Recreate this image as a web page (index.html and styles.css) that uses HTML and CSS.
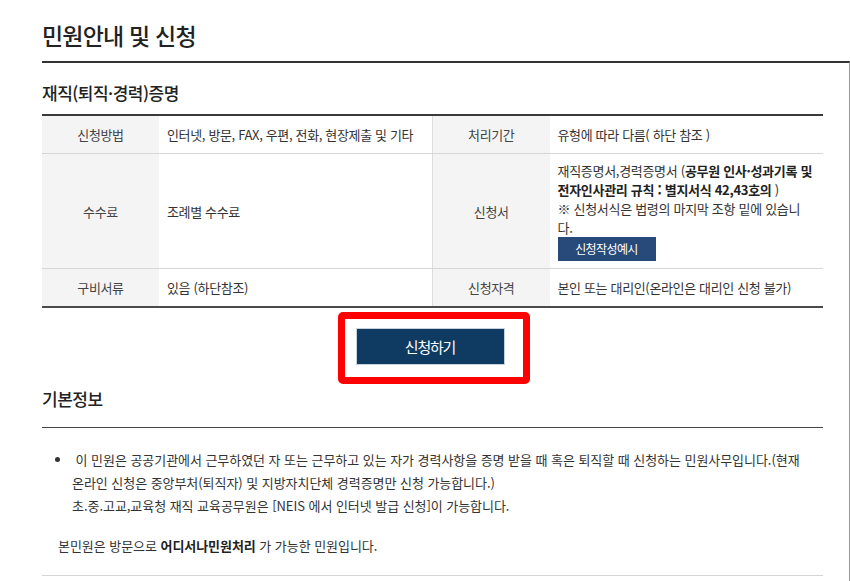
FILE: index.html
```html
<!DOCTYPE html>
<html lang="ko">

<head>
    <meta charset="UTF-8">
    <meta name="viewport" content="width=device-width, initial-scale=1.0">
    <title>민원안내 및 신청</title>
    <link rel="stylesheet" href="styles.css">
</head>

<body>
    <div class="page">
        <h1 class="page-title">민원안내 및 신청</h1>
        <div class="panel">
            <div class="panel-inner">
                <h2 class="sec-title">재직(퇴직·경력)증명</h2>
                <table class="info">
                    <colgroup>
                        <col class="col-head">
                        <col>
                        <col class="col-head">
                        <col>
                    </colgroup>
                    <tr>
                        <th>신청방법</th>
                        <td>인터넷, 방문, FAX, 우편, 전화, 현장제출 및 기타</td>
                        <th class="split">처리기간</th>
                        <td>유형에 따라 다름( 하단 참조 )</td>
                    </tr>
                    <tr>
                        <th>수수료</th>
                        <td>조례별 수수료</td>
                        <th class="split">신청서</th>
                        <td class="form-cell">
                            재직증명서,경력증명서 (<b>공무원 인사·성과기록 및<br>전자인사관리 규칙 : 별지서식 42,43호의</b> )<br>
                            ※ 신청서식은 법령의 마지막 조항 밑에 있습니<br>다.
                            <a href="#" class="sample-btn">신청작성예시</a>
                        </td>
                    </tr>
                    <tr>
                        <th>구비서류</th>
                        <td>있음 (하단참조)</td>
                        <th class="split">신청자격</th>
                        <td>본인 또는 대리인(온라인은 대리인 신청 불가)</td>
                    </tr>
                </table>

                <div class="apply-row">
                    <a href="#" class="apply-btn">신청하기<span class="mark"></span></a>
                </div>

                <h2 class="sec-title basic">기본정보</h2>
                <div class="basic-body">
                    <ul>
                        <li>&nbsp;이 민원은 공공기관에서 근무하였던 자 또는 근무하고 있는 자가 경력사항을 증명 받을 때 혹은 퇴직할 때 신청하는 민원사무입니다.(현재<br>온라인 신청은 중앙부처(퇴직자) 및 지방자치단체 경력증명만 신청 가능합니다.)<br>초.중.고교,교육청 재직 교육공무원은 [NEIS 에서 인터넷 발급 신청]이 가능합니다.</li>
                    </ul>
                    <p>본민원은 방문으로 <b>어디서나민원처리</b> 가 가능한 민원입니다.</p>
                </div>
            </div>
        </div>
    </div>
</body>

</html>
```

FILE: styles.css
```css
body {
    margin: 0;
    padding: 0;
    background: #fff;
    color: #333;
    font-family: "Noto Sans CJK KR", "Noto Sans", sans-serif;
    font-size: 13px;
    letter-spacing: -0.05px;
}

.page {
    padding-left: 42px;
}

.page-title {
    margin: 20px 0 11px;
    font-size: 23px;
    line-height: 30px;
    font-weight: 500;
    letter-spacing: -0.8px;
    color: #222;
}

.panel {
    border-top: 2px solid #333;
    border-right: 1px solid #999;
    min-height: 530px;
}

.panel-inner {
    padding-right: 26px;
}

.sec-title {
    margin: 18px 0 9px;
    font-size: 17px;
    line-height: 24px;
    font-weight: 500;
    letter-spacing: -0.5px;
    color: #222;
}

.info {
    width: 100%;
    border-collapse: collapse;
    table-layout: fixed;
    border-top: 2px solid #3a3a3a;
    border-bottom: 2px solid #4a4a4a;
    letter-spacing: -0.35px;
}

.col-head {
    width: 117px;
}

.info th,
.info td {
    padding: 9px 8px;
    line-height: 19px;
    border-bottom: 1px solid #d6d6d6;
    font-weight: normal;
    vertical-align: middle;
}

.info th {
    background-color: #f4f4f4;
    text-align: center;
    color: #444;
}

.info th.split {
    border-left: 1px solid #dcdcdc;
}

.info td {
    text-align: left;
    color: #333;
}

.info td.form-cell {
    padding: 7px 8px 7px;
    letter-spacing: -0.3px;
}

.info td b {
    font-weight: bold;
    color: #222;
}

.sample-btn {
    display: block;
    width: 98px;
    height: 24px;
    line-height: 24px;
    text-align: center;
    background-color: #284a7b;
    color: #fff;
    font-size: 12px;
    letter-spacing: -0.6px;
    text-decoration: none;
}

.apply-row {
    display: flex;
    justify-content: center;
    padding-right: 5px;
    margin-top: 20px;
}

.apply-btn {
    position: relative;
    display: block;
    width: 147px;
    height: 35px;
    line-height: 35px;
    text-align: center;
    background-color: #0f3a62;
    border: 1px solid #c9d2dc;
    color: #fff;
    font-size: 15px;
    letter-spacing: -1.2px;
    text-decoration: none;
}

/* red highlight frame drawn over the button */
.mark {
    position: absolute;
    top: -17px;
    left: -19px;
    right: -26px;
    bottom: -20px;
    border: 7px solid #ff0000;
    border-radius: 5px;
}

.sec-title.basic {
    margin: 22px 0 0;
    padding-bottom: 16px;
    border-bottom: 1px solid #444;
}

.basic-body {
    padding-top: 20px;
    border-bottom: 1px solid #d4d4d4;
    padding-bottom: 18px;
}

.basic-body ul {
    margin: 0;
    padding-left: 30px;
    line-height: 23px;
}

.basic-body li {
    list-style: disc;
}

.basic-body p {
    margin: 17px 0 0 16px;
    line-height: 23px;
}

.basic-body b {
    font-weight: bold;
    color: #222;
}
```
